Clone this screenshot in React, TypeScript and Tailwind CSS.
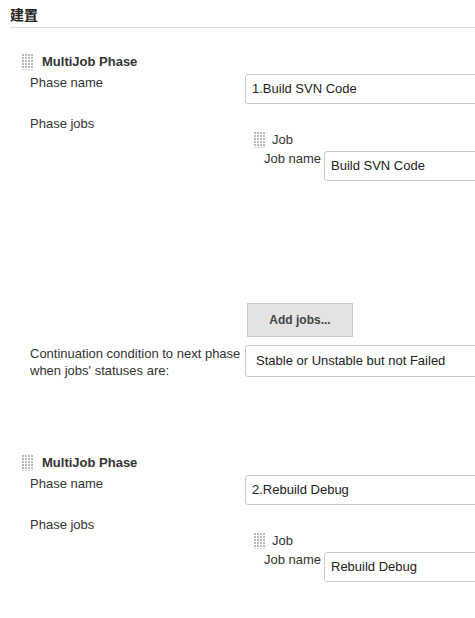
import React from 'react';

const font = "font-['Liberation_Sans',Arial,'Noto_Sans_CJK_TC',sans-serif]";

// drag handle: little grid of dots
const Handle = () => (
  <svg width="12" height="16" viewBox="0 0 12 16" className="shrink-0">
    {[0, 1, 2, 3, 4, 5].map((r) =>
      [0, 1, 2, 3].map((c) => (
        <rect
          key={`${r}-${c}`}
          x={c * 3}
          y={r * 3}
          width="2"
          height="2"
          fill={r === 5 ? '#d4d4d4' : '#b8b8b8'}
        />
      ))
    )}
  </svg>
);

type PhaseProps = {
  phaseName: string;
  jobName: string;
  last?: boolean;
};

const Phase = ({ phaseName, jobName, last }: PhaseProps) => {
  return (
    <div>
      {/* Title */}
      <div className="flex items-center h-[16px] pl-[22px] gap-[8px]">
        <Handle />
        <span className="font-bold leading-[16px]">MultiJob Phase</span>
      </div>

      {/* Phase name */}
      <div className="flex mt-[4px]">
        <div className="w-[245px] shrink-0 pl-[30px] pt-[1px] leading-[16px]">Phase name</div>
        <div className="w-[300px] h-[30px] shrink-0 border border-[#c9c9c9] rounded-[3px] pl-[6px] flex items-center text-[#222]">
          {phaseName}
        </div>
      </div>

      {/* Phase jobs */}
      <div className="flex mt-[12px]">
        <div className="w-[245px] shrink-0 pl-[30px] leading-[16px]">Phase jobs</div>
        <div className="flex-1 pt-[16px]">
          <div className="flex items-center h-[16px] pl-[9px] gap-[6px]">
            <Handle />
            <span className="leading-[16px]">Job</span>
          </div>
          <div className="flex mt-[3px]">
            <div className="w-[79px] shrink-0 pl-[19px] leading-[16px]">Job name</div>
            <div className="w-[200px] h-[30px] shrink-0 border border-[#c9c9c9] rounded-[3px] pl-[6px] flex items-center text-[#222]">
              {jobName}
            </div>
          </div>
        </div>
      </div>

      {!last && (
        <>
          {/* Add jobs */}
          <div className="flex mt-[122px]">
            <div className="w-[247px] shrink-0" />
            <button className="w-[106px] h-[34px] bg-[#e3e3e3] border border-[#cccccc] text-[12px] font-bold text-[#444]">
              Add jobs...
            </button>
          </div>

          {/* Continuation condition */}
          <div className="flex mt-[8px]">
            <div className="w-[245px] shrink-0 pl-[30px] leading-[17px]">
              Continuation condition to next phase
              <br />
              when jobs' statuses are:
            </div>
            <div className="w-[300px] h-[32px] shrink-0 border border-[#c9c9c9] rounded-[3px] pl-[10px] flex items-center text-[#222]">
              Stable or Unstable but not Failed
            </div>
          </div>
        </>
      )}
    </div>
  );
};

export default function App() {
  return (
    <div className={`w-[475px] h-[618px] overflow-hidden bg-white text-[13px] text-[#333] ${font}`}>
      {/* Section header */}
      <div className="pl-[10px]">
        <div className="pt-[7px] pb-[4px] border-b border-[#dddddd] font-bold text-[14px] leading-[16px] text-[#222]">
          建置
        </div>
      </div>

      <div className="mt-[26px]">
        <Phase phaseName="1.Build SVN Code" jobName="Build SVN Code" />
      </div>

      <div className="mt-[76px]">
        <Phase phaseName="2.Rebuild Debug" jobName="Rebuild Debug" last />
      </div>
    </div>
  );
}
